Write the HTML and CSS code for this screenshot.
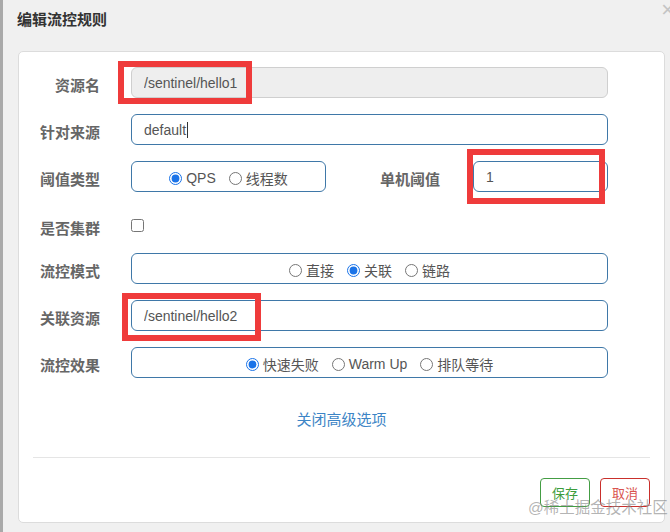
FILE: index.html
```html
<!DOCTYPE html>
<html lang="zh-CN">
<head>
<meta charset="utf-8">
<title>编辑流控规则</title>
<link rel="stylesheet" href="styles.css">
</head>
<body>
<div class="dialog">
  <div class="dialog-head">
    <h4 class="dialog-title">编辑流控规则</h4>
    <span class="close">×</span>
  </div>
  <div class="card">
    <form class="form">
      <div class="row">
        <label class="label">资源名</label>
        <input class="control disabled" type="text" value="/sentinel/hello1" disabled>
      </div>
      <div class="row">
        <label class="label">针对来源</label>
        <div class="control textbox">default<span class="caret"></span></div>
      </div>
      <div class="row">
        <label class="label">阈值类型</label>
        <div class="control group narrow">
          <label class="opt"><input type="radio" name="grade" checked>QPS</label>
          <label class="opt"><input type="radio" name="grade">线程数</label>
        </div>
        <label class="label label2">单机阈值</label>
        <input class="control small" type="text" value="1">
      </div>
      <div class="row row-check">
        <label class="label">是否集群</label>
        <input class="check" type="checkbox">
      </div>
      <div class="row">
        <label class="label">流控模式</label>
        <div class="control group">
          <label class="opt"><input type="radio" name="mode">直接</label>
          <label class="opt"><input type="radio" name="mode" checked>关联</label>
          <label class="opt"><input type="radio" name="mode">链路</label>
        </div>
      </div>
      <div class="row">
        <label class="label">关联资源</label>
        <input class="control" type="text" value="/sentinel/hello2">
      </div>
      <div class="row">
        <label class="label">流控效果</label>
        <div class="control group">
          <label class="opt"><input type="radio" name="effect" checked>快速失败</label>
          <label class="opt"><input type="radio" name="effect">Warm Up</label>
          <label class="opt"><input type="radio" name="effect">排队等待</label>
        </div>
      </div>
    </form>
    <div class="toggle"><a class="link">关闭高级选项</a></div>
    <div class="footer">
      <button class="btn btn-save" type="button">保存</button>
      <button class="btn btn-cancel" type="button">取消</button>
    </div>
  </div>
  <div class="mark mark1"></div>
  <div class="mark mark2"></div>
  <div class="mark mark3"></div>
  <div class="watermark">@稀土掘金技术社区</div>
</div>
</body>
</html>
```

FILE: styles.css
```css
html, body {
  margin: 0;
  padding: 0;
}
body {
  width: 670px;
  height: 532px;
  overflow: hidden;
  background: #f0f0f0;
  font-family: "Liberation Sans", "Noto Sans CJK SC", sans-serif;
  color: #555;
}
.dialog {
  position: relative;
  height: 532px;
  border-left: 3px solid #a9a9a9;
  box-sizing: border-box;
}
.dialog-head {
  height: 51px;
  position: relative;
}
.dialog-title {
  margin: 0;
  padding: 10px 0 0 14px;
  font-size: 15px;
  line-height: 20px;
  font-weight: bold;
  color: #333;
}
.close {
  position: absolute;
  right: -4px;
  top: -1px;
  font-size: 22px;
  line-height: 22px;
  color: #c4c4c4;
}
.card {
  margin-left: 15px;
  width: 647px;
  height: 472px;
  box-sizing: border-box;
  background: #fff;
  border: 1px solid #dcdcdc;
  border-radius: 5px;
  padding-top: 15px;
}
.form {
  display: flex;
  flex-direction: column;
  gap: 16px;
  margin: 0;
}
.row {
  display: flex;
  align-items: center;
  height: 31px;
}
.row-check {
  height: 29px;
  padding-top: 6px;
  box-sizing: border-box;
}
.label {
  width: 81px;
  flex: none;
  text-align: right;
  font-size: 15px;
  font-weight: bold;
  color: #666;
  margin-right: 31px;
  padding-top: 3px;
}
.control {
  box-sizing: border-box;
  width: 477px;
  height: 31px;
  border: 1px solid #3f78a8;
  border-radius: 6px;
  background: #fff;
  font-family: "Liberation Sans", "Noto Sans CJK SC", sans-serif;
  font-size: 14px;
  color: #555;
  padding: 0 12px;
  margin: 0;
  outline: none;
}
.control.disabled {
  background: #eee;
  border-color: #cfcfcf;
  color: #555;
}
.textbox {
  display: flex;
  align-items: center;
}
.caret {
  display: inline-block;
  width: 1px;
  height: 16px;
  background: #333;
  margin-left: 1px;
}
.group {
  display: flex;
  align-items: center;
  justify-content: center;
  gap: 13px;
  padding: 3px 0 0 0;
}
.group.narrow {
  width: 195px;
}
.opt {
  display: flex;
  align-items: center;
  gap: 4px;
  font-size: 14px;
  color: #555;
}
.opt input {
  width: 13px;
  height: 13px;
  margin: 0;
  accent-color: #1a73e8;
}
.label2 {
  width: 114px;
  margin-right: 33px;
}
.control.small {
  width: 135px;
}
.check {
  width: 13px;
  height: 13px;
  margin: 0;
}
.toggle {
  margin-top: 31px;
  height: 20px;
  text-align: center;
  line-height: 20px;
  padding-top: 1px;
  box-sizing: border-box;
}
.link {
  font-size: 15px;
  color: #3d85c6;
  cursor: pointer;
}
.footer {
  margin: 28px 14px 0 14px;
  border-top: 1px solid #e5e5e5;
  padding-top: 20px;
  display: flex;
  justify-content: flex-end;
  gap: 10px;
}
.btn {
  width: 50px;
  height: 29px;
  box-sizing: border-box;
  background: #fff;
  border-radius: 4px;
  font-family: "Liberation Sans", "Noto Sans CJK SC", sans-serif;
  font-size: 13px;
  padding: 0;
  cursor: pointer;
}
.btn-save {
  border: 1px solid #449d44;
  color: #3c9d3c;
}
.btn-cancel {
  border: 1px solid #c9302c;
  color: #d9534f;
}
.mark {
  position: absolute;
  border: 6px solid #ef3b3b;
  box-sizing: border-box;
}
.mark1 {
  left: 115px;
  top: 61px;
  width: 134px;
  height: 43px;
}
.mark2 {
  left: 464px;
  top: 149px;
  width: 138px;
  height: 55px;
}
.mark3 {
  left: 119px;
  top: 293px;
  width: 139px;
  height: 48px;
}
.watermark {
  position: absolute;
  left: 525px;
  top: 498px;
  font-size: 15.5px;
  line-height: 20px;
  color: rgba(130, 130, 130, 0.6);
  white-space: nowrap;
}
```
